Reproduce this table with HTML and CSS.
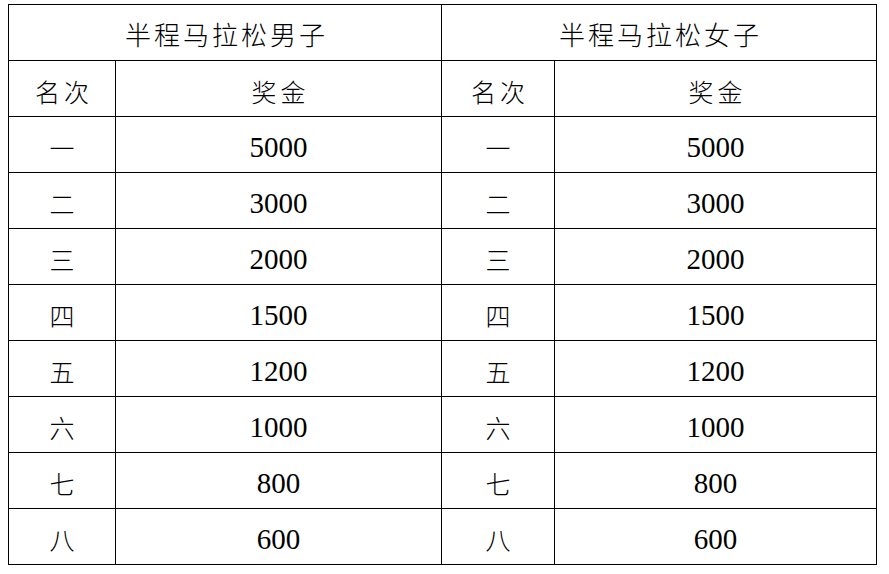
FILE: index.html
```html
<!DOCTYPE html>
<html lang="zh-CN">
<head>
<meta charset="utf-8">
<title>半程马拉松奖金</title>
<link rel="stylesheet" href="styles.css">
</head>
<body>
<table class="prize">
  <colgroup>
    <col class="c-rank"><col class="c-money"><col class="c-rank2"><col class="c-money2">
  </colgroup>
  <tr class="title">
    <th colspan="2">半程马拉松男子</th>
    <th colspan="2">半程马拉松女子</th>
  </tr>
  <tr class="head">
    <th>名次</th><th>奖金</th><th>名次</th><th>奖金</th>
  </tr>
  <tr><td class="rk">一</td><td class="num">5000</td><td class="rk">一</td><td class="num">5000</td></tr>
  <tr><td class="rk">二</td><td class="num">3000</td><td class="rk">二</td><td class="num">3000</td></tr>
  <tr><td class="rk">三</td><td class="num">2000</td><td class="rk">三</td><td class="num">2000</td></tr>
  <tr><td class="rk">四</td><td class="num">1500</td><td class="rk">四</td><td class="num">1500</td></tr>
  <tr><td class="rk">五</td><td class="num">1200</td><td class="rk">五</td><td class="num">1200</td></tr>
  <tr><td class="rk">六</td><td class="num">1000</td><td class="rk">六</td><td class="num">1000</td></tr>
  <tr><td class="rk">七</td><td class="num">800</td><td class="rk">七</td><td class="num">800</td></tr>
  <tr><td class="rk">八</td><td class="num">600</td><td class="rk">八</td><td class="num">600</td></tr>
</table>
</body>
</html>
```
FILE: styles.css
```css
html, body {
  margin: 0;
  padding: 0;
  background: #ffffff;
}
body {
  padding: 4px 0 0 8px;
}
.prize {
  border-collapse: collapse;
  table-layout: fixed;
  width: 868px;
  color: #000;
}
.c-rank { width: 107px; }
.c-money { width: 326px; }
.c-rank2 { width: 113px; }
.c-money2 { width: 322px; }
.prize th,
.prize td {
  border: 1.5px solid #000;
  height: 56px;
  padding: 5px 0 0 0;
  box-sizing: border-box;
  text-align: center;
  vertical-align: middle;
  font-weight: 300;
  font-family: "Noto Sans CJK SC", sans-serif;
  font-size: 25px;
  line-height: 1;
}
.prize th {
  letter-spacing: 4px;
  text-indent: 4px;
}
.prize .title th {
  font-size: 26px;
  letter-spacing: 3px;
  text-indent: 3px;
  padding-top: 2px;
}
.prize td.num {
  font-family: "Liberation Serif", "DejaVu Serif", serif;
  font-weight: normal;
  font-size: 29px;
  letter-spacing: 0;
}
.prize td.rk {
  font-size: 25px;
}
```
